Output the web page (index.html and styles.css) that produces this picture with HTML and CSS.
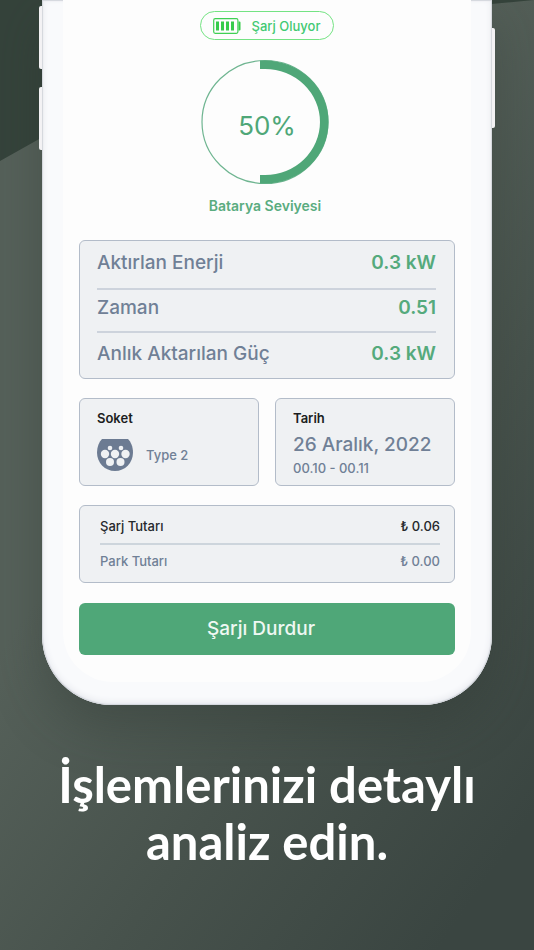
FILE: index.html
```html
<!DOCTYPE html>
<html lang="tr">
<head>
<meta charset="utf-8">
<meta name="viewport" content="width=device-width, initial-scale=1">
<title>Şarj Detayı</title>
<link rel="stylesheet" href="styles.css">
</head>
<body>
<main class="poster">
  <div class="phone">
    <span class="key key-up"></span>
    <span class="key key-down"></span>
    <span class="key key-power"></span>
    <section class="screen">
      <p class="status">
        <svg class="battery" width="28" height="16" viewBox="0 0 28 16" aria-hidden="true">
          <rect x="0.7" y="0.7" width="24.2" height="14.6" rx="1.5" fill="none" stroke="#3fd053" stroke-width="1.2"/>
          <path d="M3 3.5h3v9H3zM8 3.5h3v9H8zM13 3.5h3v9h-3zM18 3.5h3v9h-3zM25.500 3.500h1a1 1 0 0 1 1 1v7a1 1 0 0 1-1 1h-1z" fill="#36cb4b"/>
        </svg>
        <span>Şarj Oluyor</span>
      </p>
      <div class="gauge">
        <svg class="ring" viewBox="2 0 128 124" aria-hidden="true">
          <ellipse cx="64" cy="62" rx="63" ry="61.500" fill="none" stroke="#6fb591" stroke-width="1.200"/>
          <path d="M59 0.500H64A63.500 61.500 0 0 1 64 123.500H59V115H64A55 53 0 0 0 64 9H59Z" fill="#4fa778"/>
        </svg>
        <strong class="percent">50%</strong>
      </div>
      <p class="gauge-label">Batarya Seviyesi</p>

      <dl class="card metrics">
        <div class="metric"><dt>Aktırlan Enerji</dt><dd>0.3 kW</dd></div>
        <div class="metric"><dt>Zaman</dt><dd>0.51</dd></div>
        <div class="metric"><dt>Anlık Aktarılan Güç</dt><dd>0.3 kW</dd></div>
      </dl>

      <div class="pair">
        <section class="card info">
          <h2>Soket</h2>
          <div class="socket">
            <svg width="36" height="32" viewBox="0 0 36 32" aria-hidden="true">
              <path d="M5 0H31C34 3 36 8 36 13.500C36 24 28 32 18 32S0 24 0 13.500C0 8 2 3 5 0Z" fill="#6c7b92"/>
              <g fill="#eff1f3"><circle cx="13" cy="9" r="2.300"/><circle cx="24" cy="9" r="2.300"/><circle cx="8" cy="15" r="4.200"/><circle cx="18" cy="15" r="4.200"/><circle cx="28.500" cy="15" r="4.200"/><circle cx="13" cy="23" r="4"/><circle cx="23.500" cy="23" r="4"/></g>
            </svg>
            <span>Type 2</span>
          </div>
        </section>
        <section class="card info">
          <h2>Tarih</h2>
          <p class="date">26 Aralık, 2022</p>
          <p class="time">00.10 - 00.11</p>
        </section>
      </div>

      <dl class="card costs">
        <div class="cost cost-main"><dt>Şarj Tutarı</dt><dd>₺ 0.06</dd></div>
        <div class="cost"><dt>Park Tutarı</dt><dd>₺ 0.00</dd></div>
      </dl>

      <button class="stop" type="button">Şarjı Durdur</button>
    </section>
  </div>
  <h1 class="headline">İşlemlerinizi detaylı<br>analiz edin.</h1>
</main>
</body>
</html>
```
FILE: styles.css
```css
* {
  box-sizing: border-box;
}

body,
h1,
h2,
p,
dl,
dd {
  margin: 0;
}

body {
  font-family: Inter, "Noto Sans", sans-serif;
  font-weight: 500;
  color: #708096;
}

.poster {
  position: relative;
  min-height: 100vh;
  padding: 0 42px 80px;
  overflow: hidden;
  background: linear-gradient(125deg, #56615a 0%, #56615a 38%, #47524c 65%, #3a4541 92%);
}

/* dark wedge behind the top of the phone */
.poster::before {
  content: "";
  position: absolute;
  inset: 0 0 auto;
  height: 161px;
  background: #35433b;
  clip-path: polygon(0 0, 100% 0, 92% 4px, 50% 10px, 8% 137px, 0 100%);
}

.phone {
  position: relative;
  max-width: 450px;
  margin: 0 auto;
  padding: 0 21px 23px;
  border-radius: 0 0 70px 70px;
  background: #f9fafc;
  box-shadow:
    inset 0 0 1px 1px #d3d6dc,
    inset 0 -2px 7px 0 #e3e5eb,
    0 20px 50px rgba(42, 52, 47, 0.35);
}

.key {
  position: absolute;
  left: -3px;
  width: 3px;
  height: 63px;
  border-radius: 2px 0 0 2px;
  background: #f3f2f4;
}

.key-up {
  top: 6px;
}

.key-down {
  top: 87px;
}

.key-power {
  top: 28px;
  right: -3px;
  left: auto;
  height: 100px;
  border-radius: 0 2px 2px 0;
}

.screen {
  display: flex;
  flex-direction: column;
  padding: 11px 16px 27px;
  border-radius: 0 0 50px 50px;
  background: #fdfdfd;
}

.status {
  display: flex;
  align-items: center;
  align-self: center;
  gap: 11px;
  height: 29px;
  padding: 0 13px 0 12px;
  border: 1px solid #74e383;
  border-radius: 15px;
  font-size: 13px;
  color: #42c972;
}

.gauge {
  display: grid;
  place-items: center;
  align-self: center;
  margin-top: 20px;
}

.ring,
.percent {
  grid-area: 1 / 1;
}

.ring {
  width: 128px;
  height: 124px;
  overflow: visible;
}

.percent {
  padding-top: 6px;
  font-size: 26px;
  font-weight: 400;
  color: #4fa778;
}

.gauge-label {
  margin: 12px 0 24px;
  padding-right: 4px;
  text-align: center;
  font-size: 14px;
  font-weight: 600;
  line-height: 20px;
  color: #5aac80;
}

.card {
  border: 1px solid #b3bcc9;
  border-radius: 6px;
  background: #eff1f3;
}

.metrics {
  padding: 4px 18px 6px 17px;
  font-size: 19px;
  line-height: 36px;
}

.metric,
.cost {
  display: flex;
  justify-content: space-between;
}

.metric {
  padding: 0 0 7px;
}

.metric + .metric {
  padding: 0 0 5px;
  border-top: 2px solid #cdd3dc;
}

.metric:last-child {
  padding: 3px 0 0;
}

.metric dd {
  font-weight: 600;
  color: #55aa7c;
}

.pair {
  display: grid;
  grid-template-columns: 1fr 1fr;
  gap: 16px;
  margin: 19px 0;
}

.info {
  min-height: 88px;
  padding: 9px 17px 7px;
}

.info h2 {
  font-size: 13px;
  font-weight: 600;
  line-height: 20px;
  color: #1b1d20;
}

.socket {
  display: flex;
  align-items: center;
  gap: 13px;
  padding-top: 11px;
  font-size: 13px;
}

.date {
  padding-top: 4px;
  font-size: 19px;
  line-height: 26px;
  white-space: nowrap;
}

.time {
  font-size: 13px;
  line-height: 20px;
}

.costs {
  padding: 4px 14px 4px 20px;
  font-size: 13px;
  line-height: 33px;
}

.cost-main {
  border-bottom: 2px solid #cdd5dc;
  color: #25282c;
}

.stop {
  margin-top: 20px;
  padding: 0 12px 0 0;
  border: 0;
  border-radius: 6px;
  background: #4fa778;
  font: inherit;
  font-size: 19px;
  line-height: 52px;
  color: #eff8f3;
}

.headline {
  position: relative;
  margin-top: 51px;
  text-align: center;
  font-family: Lato, Inter, sans-serif;
  font-size: 49px;
  font-weight: 700;
  line-height: 57px;
  color: #ffffff;
}
```
